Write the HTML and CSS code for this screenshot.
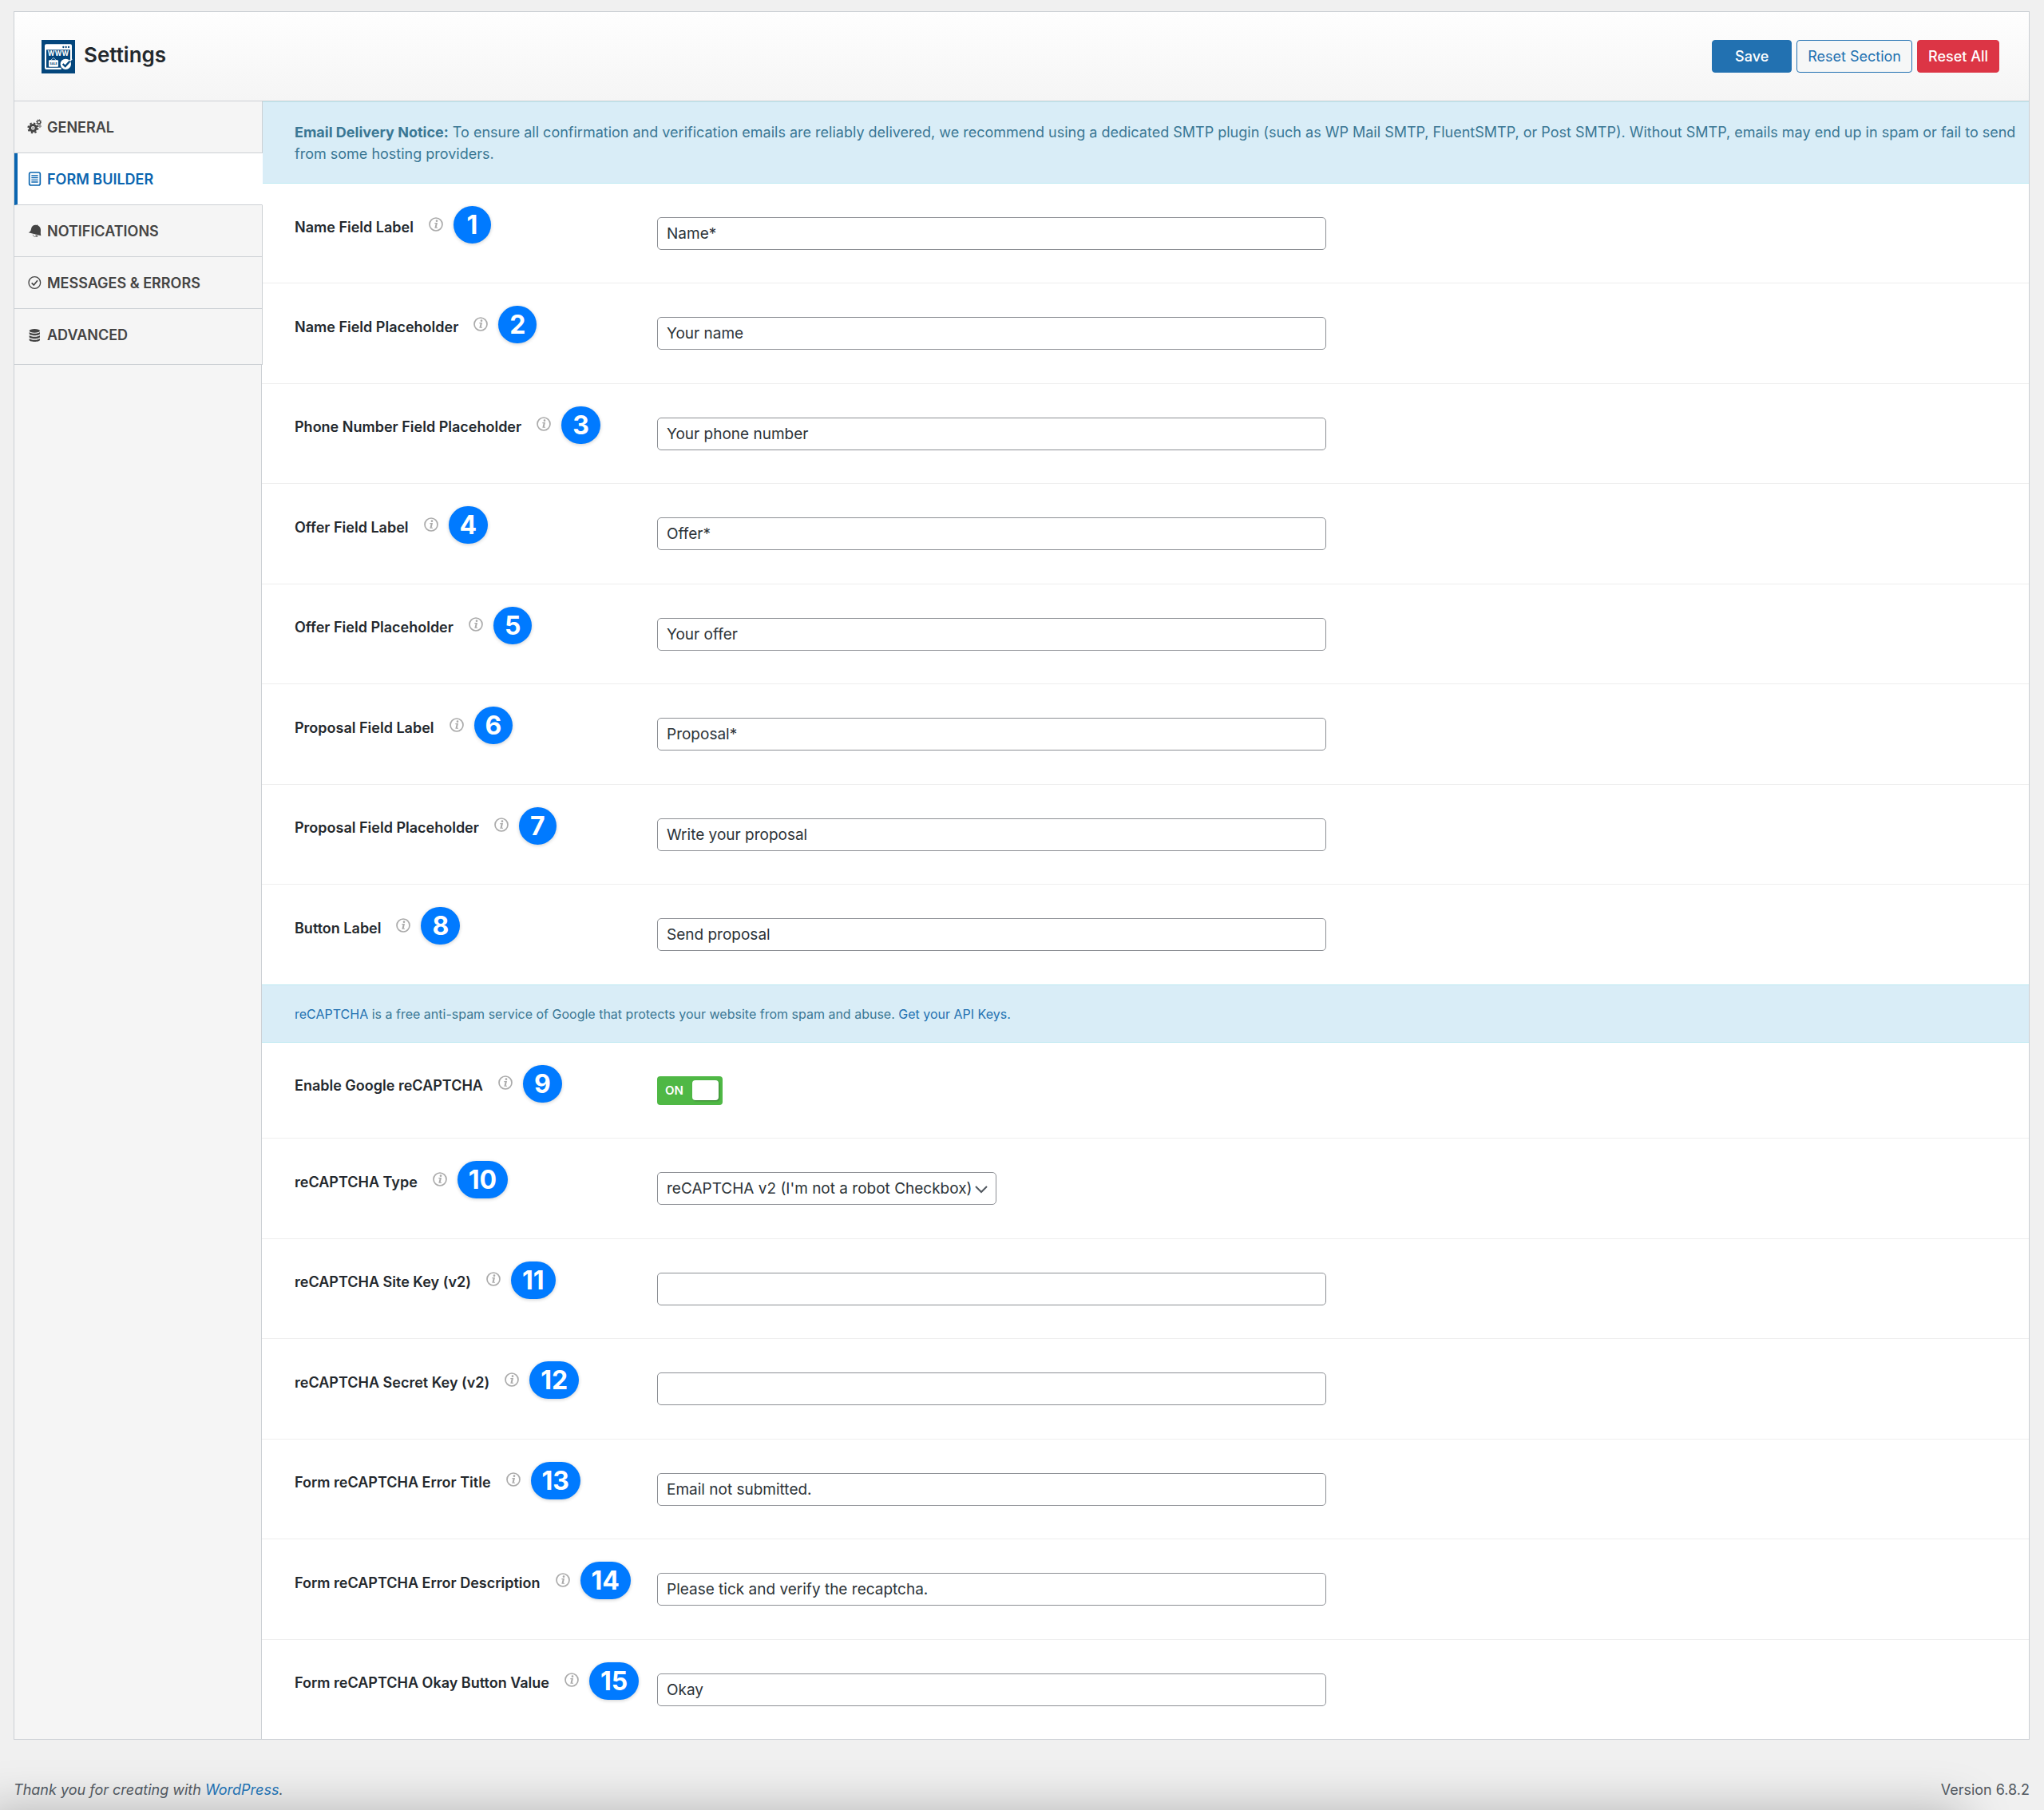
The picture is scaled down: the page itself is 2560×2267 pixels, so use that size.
FILE: index.html
```html
<!DOCTYPE html>
<html lang="en">
<head>
    <meta charset="UTF-8">
    <meta name="viewport" content="width=device-width, initial-scale=1.0">
    <title>Settings</title>
    <link rel="stylesheet" href="styles.css">
</head>
<body>

<!-- shared info icon -->
<svg class="sprite" aria-hidden="true">
    <symbol id="info" viewBox="0 0 54 54">
        <circle cx="27" cy="27" r="24" fill="none" stroke="#aaa" stroke-width="5"/>
        <circle cx="30" cy="14" r="4" fill="#aaa"/>
        <path d="M22 21h11l-4 17h4v3H22l4-16h-4z" fill="#aaa"/>
    </symbol>
</svg>

<form class="panel">
    <header class="panel-header">
        <svg class="logo" viewBox="0 0 126 126" aria-hidden="true">
            <rect width="126" height="126" fill="#04467c"/>
            <path d="M18 16h90a6 6 0 0 1 6 6v50h-6V37H18v67h56v7H18a6 6 0 0 1-6-6V22a6 6 0 0 1 6-6z" fill="#fff"/>
            <circle cx="82" cy="27" r="3.4" fill="#04467c"/>
            <circle cx="92" cy="27" r="3.4" fill="#04467c"/>
            <circle cx="102" cy="27" r="3.4" fill="#04467c"/>
            <text x="63" y="61" text-anchor="middle" class="logo-www">WWW</text>
            <path d="M33 78l12-11 12 11" fill="none" stroke="#fff" stroke-width="2"/>
            <rect x="27" y="76" width="36" height="25" rx="3" fill="#fff"/>
            <text x="45" y="93" text-anchor="middle" class="logo-sale">SALE</text>
            <circle cx="91" cy="91" r="20" fill="#fff"/>
            <path d="M80 90l9 9 20-22" fill="none" stroke="#04467c" stroke-width="7"/>
            <path d="M106 79l8-8" stroke="#fff" stroke-width="6"/>
        </svg>
        <h1>Settings</h1>
        <div class="actions">
            <button type="submit" class="btn btn-save">Save</button>
            <button type="button" class="btn btn-outline">Reset Section</button>
            <button type="button" class="btn btn-danger">Reset All</button>
        </div>
    </header>

    <div class="panel-body">
        <aside class="sidebar">
            <nav>
                <a href="#general">
                    <svg class="nav-icon" viewBox="0 0 54 60" aria-hidden="true">
                        <g fill="none" stroke="currentColor">
                            <circle cx="22" cy="34" r="11.5" stroke-width="9"/>
                            <circle cx="22" cy="34" r="18" stroke-width="6" stroke-dasharray="7 7.13"/>
                            <circle cx="22" cy="34" r="2.5" stroke-width="2"/>
                            <circle cx="44" cy="12" r="6" stroke-width="4"/>
                            <circle cx="44" cy="12" r="9.5" stroke-width="3" stroke-dasharray="3.7 3.76"/>
                            <circle cx="48" cy="27" r="3" stroke-width="2"/>
                            <circle cx="48" cy="27" r="5" stroke-width="2" stroke-dasharray="2 1.92"/>
                        </g>
                    </svg>
                    GENERAL
                </a>
                <a href="#form-builder" class="active">
                    <svg class="nav-icon" viewBox="0 0 54 60" aria-hidden="true">
                        <rect x="8" y="6" width="41" height="48" rx="6" fill="none" stroke="currentColor" stroke-width="5"/>
                        <path d="M16 18h25M16 26h25M16 34h25M16 42h25" stroke="currentColor" stroke-width="4"/>
                    </svg>
                    FORM BUILDER
                </a>
                <a href="#notifications">
                    <svg class="nav-icon" viewBox="0 0 54 60" aria-hidden="true">
                        <path d="M5 37c7-3 9-7 10-14C17 12 26 7 35 9c1-3 5-2 5 1 8 4 12 12 11 21-1 7 0 11 1 18z" fill="currentColor"/>
                        <path d="M22 44c0 8 9 12 14 5" fill="none" stroke="currentColor" stroke-width="2"/>
                        <path d="M30 46l6 8 5-5z" fill="currentColor"/>
                    </svg>
                    NOTIFICATIONS
                </a>
                <a href="#messages">
                    <svg class="nav-icon" viewBox="0 0 54 60" aria-hidden="true">
                        <circle cx="28" cy="30" r="22" fill="none" stroke="currentColor" stroke-width="4"/>
                        <path d="M17 31l8 8 14-17" fill="none" stroke="currentColor" stroke-width="5"/>
                    </svg>
                    MESSAGES &amp; ERRORS
                </a>
                <a href="#advanced">
                    <svg class="nav-icon" viewBox="0 0 54 60" aria-hidden="true">
                        <g fill="currentColor">
                            <ellipse cx="28" cy="13" rx="20" ry="7"/>
                            <path d="M8 18c6 7 34 7 40 0v6c0 9-40 9-40 0z"/>
                            <path d="M8 30c6 7 34 7 40 0v6c0 9-40 9-40 0z"/>
                            <path d="M8 42c6 7 34 7 40 0v5c0 9-40 9-40 0z"/>
                        </g>
                    </svg>
                    ADVANCED
                </a>
            </nav>
        </aside>

        <main class="content">
            <div class="notice">
                <strong>Email Delivery Notice:</strong> To ensure all confirmation and verification emails are reliably delivered, we recommend using a dedicated SMTP plugin (such as WP Mail SMTP, FluentSMTP, or Post SMTP). Without SMTP, emails may end up in spam or fail to send from some hosting providers.
            </div>

            <div class="field">
                <div class="field-title">
                    <label for="name_label">Name Field Label</label>
                    <svg class="info"><use href="#info"/></svg>
                    <span class="step">1</span>
                </div>
                <input type="text" id="name_label" value="Name*">
            </div>
            <div class="field">
                <div class="field-title">
                    <label for="name_placeholder">Name Field Placeholder</label>
                    <svg class="info"><use href="#info"/></svg>
                    <span class="step">2</span>
                </div>
                <input type="text" id="name_placeholder" value="Your name">
            </div>
            <div class="field">
                <div class="field-title">
                    <label for="phone_placeholder">Phone Number Field Placeholder</label>
                    <svg class="info"><use href="#info"/></svg>
                    <span class="step">3</span>
                </div>
                <input type="text" id="phone_placeholder" value="Your phone number">
            </div>
            <div class="field">
                <div class="field-title">
                    <label for="offer_label">Offer Field Label</label>
                    <svg class="info"><use href="#info"/></svg>
                    <span class="step">4</span>
                </div>
                <input type="text" id="offer_label" value="Offer*">
            </div>
            <div class="field">
                <div class="field-title">
                    <label for="offer_placeholder">Offer Field Placeholder</label>
                    <svg class="info"><use href="#info"/></svg>
                    <span class="step">5</span>
                </div>
                <input type="text" id="offer_placeholder" value="Your offer">
            </div>
            <div class="field">
                <div class="field-title">
                    <label for="proposal_label">Proposal Field Label</label>
                    <svg class="info"><use href="#info"/></svg>
                    <span class="step">6</span>
                </div>
                <input type="text" id="proposal_label" value="Proposal*">
            </div>
            <div class="field">
                <div class="field-title">
                    <label for="proposal_placeholder">Proposal Field Placeholder</label>
                    <svg class="info"><use href="#info"/></svg>
                    <span class="step">7</span>
                </div>
                <input type="text" id="proposal_placeholder" value="Write your proposal">
            </div>
            <div class="field">
                <div class="field-title">
                    <label for="button_label">Button Label</label>
                    <svg class="info"><use href="#info"/></svg>
                    <span class="step">8</span>
                </div>
                <input type="text" id="button_label" value="Send proposal">
            </div>

            <div class="notice notice-small">
                <a href="#recaptcha">reCAPTCHA</a> is a free anti-spam service of Google that protects your website from spam and abuse. <a href="#keys">Get your API Keys.</a>
            </div>

            <div class="field">
                <div class="field-title">
                    <label for="enable_recaptcha">Enable Google reCAPTCHA</label>
                    <svg class="info"><use href="#info"/></svg>
                    <span class="step">9</span>
                </div>
                <label class="switch">
                    <span>ON</span>
                    <input type="checkbox" id="enable_recaptcha" checked>
                </label>
            </div>
            <div class="field">
                <div class="field-title">
                    <label for="recaptcha_type">reCAPTCHA Type</label>
                    <svg class="info"><use href="#info"/></svg>
                    <span class="step">10</span>
                </div>
                <div class="select-wrap">
                    <select id="recaptcha_type">
                        <option>reCAPTCHA v2 (I'm not a robot Checkbox)</option>
                    </select>
                    <svg class="chevron" viewBox="0 0 16 16" aria-hidden="true">
                        <path d="M1 5l7 7 7-7" fill="none" stroke="#50575e" stroke-width="2"/>
                    </svg>
                </div>
            </div>
            <div class="field">
                <div class="field-title">
                    <label for="site_key">reCAPTCHA Site Key (v2)</label>
                    <svg class="info"><use href="#info"/></svg>
                    <span class="step">11</span>
                </div>
                <input type="text" id="site_key">
            </div>
            <div class="field">
                <div class="field-title">
                    <label for="secret_key">reCAPTCHA Secret Key (v2)</label>
                    <svg class="info"><use href="#info"/></svg>
                    <span class="step">12</span>
                </div>
                <input type="text" id="secret_key">
            </div>
            <div class="field">
                <div class="field-title">
                    <label for="error_title">Form reCAPTCHA Error Title</label>
                    <svg class="info"><use href="#info"/></svg>
                    <span class="step">13</span>
                </div>
                <input type="text" id="error_title" value="Email not submitted.">
            </div>
            <div class="field">
                <div class="field-title">
                    <label for="error_description">Form reCAPTCHA Error Description</label>
                    <svg class="info"><use href="#info"/></svg>
                    <span class="step">14</span>
                </div>
                <input type="text" id="error_description" value="Please tick and verify the recaptcha.">
            </div>
            <div class="field">
                <div class="field-title">
                    <label for="okay_value">Form reCAPTCHA Okay Button Value</label>
                    <svg class="info"><use href="#info"/></svg>
                    <span class="step">15</span>
                </div>
                <input type="text" id="okay_value" value="Okay">
            </div>
        </main>
    </div>
</form>

<footer class="page-footer">
    <em>Thank you for creating with <a href="#wordpress">WordPress</a>.</em>
    <span>Version 6.8.2</span>
</footer>

</body>
</html>
```
FILE: styles.css
```css
* {
    box-sizing: border-box;
}

body {
    display: flex;
    flex-direction: column;
    min-height: 100vh;
    margin: 0;
    background: #f0f0f0;
    color: #23282d;
    font-family: Inter, "Liberation Sans", sans-serif;
    font-size: 18px;
}

a {
    color: #2271b1;
    text-decoration: none;
}

.sprite {
    display: none;
}

.panel {
    display: flex;
    flex-direction: column;
    flex: 1;
    margin: 14px 18px 0 17px;
    background: #fff;
    border: 1px solid #ccd0d4;
}

/* header */
.panel-header {
    display: flex;
    align-items: center;
    height: 112px;
    padding: 0 37px 0 34px;
    background: linear-gradient(#fefefe, #f5f5f5);
    border-bottom: 1px solid #ccd0d4;
}

.logo {
    width: 42px;
    height: 42px;
}

.logo-www {
    font: bold 25px Inter, sans-serif;
    fill: #fff;
}

.logo-sale {
    font: bold 11px Inter, sans-serif;
    fill: #04467c;
}

h1 {
    margin: 0 0 4px 11px;
    font-size: 26px;
    font-weight: 600;
}

.actions {
    display: flex;
    gap: 6px;
    margin-left: auto;
}

.btn {
    height: 41px;
    padding: 0 13px;
    border: 1px solid;
    border-radius: 4px;
    font: 18px Inter, "Liberation Sans", sans-serif;
    cursor: pointer;
}

.btn-save {
    padding: 0 28px;
    background: #2271b1;
    border-color: #2271b1;
    color: #fff;
    font-weight: 500;
}

.btn-outline {
    background: #f6f7f7;
    border-color: #2271b1;
    color: #2271b1;
}

.btn-danger {
    background: #dc3545;
    border-color: #dc3545;
    color: #fff;
    font-weight: 500;
}

/* sidebar */
.panel-body {
    display: flex;
    flex: 1;
}

.sidebar {
    flex: 0 0 310px;
    background: #f5f5f5;
    border-right: 1px solid #ccd0d4;
}

.sidebar nav {
    position: relative;
    margin-right: -2px;
}

.sidebar a {
    display: flex;
    align-items: center;
    gap: 7px;
    height: 65px;
    padding-left: 16px;
    background: #f5f5f5;
    border: solid #ccd0d4;
    border-width: 0 1px 1px 0;
    color: #444;
    font-weight: 600;
}

.sidebar a:last-child {
    height: 70px;
    padding-bottom: 4px;
}

.sidebar a.active {
    padding-left: 12px;
    background: #fff;
    border-left: 4px solid #0a65b0;
    border-right-color: #fff;
    color: #0a65b0;
}

.nav-icon {
    width: 18px;
    height: 20px;
}

/* fields */
.content {
    display: flex;
    flex-direction: column;
    flex: 1;
}

.notice {
    padding: 24px 12px 23px 41px;
    background: #d9edf7;
    border: solid #bce8f1;
    border-width: 1px 0;
    color: #3a7794;
    line-height: 27px;
}

.notice-small {
    font-size: 16px;
    line-height: 24px;
}

.field {
    display: flex;
    align-items: flex-start;
    flex: 1 0 auto;
    padding: 42px 41px 40px;
    border-bottom: 1px solid #eee;
}

.field:last-child,
.field:has(+ .notice) {
    border-bottom: 0;
}

.field-title {
    display: flex;
    align-items: center;
    flex: 0 0 454px;
    height: 47px;
    margin: -14px 0 -8px;
}

.field-title label {
    padding-top: 5px;
    font-weight: 600;
}

.info {
    width: 18px;
    height: 18px;
    margin: 0 13px 2px 19px;
}

.step {
    min-width: 47px;
    padding: 0 14px;
    background: #007aff;
    border-radius: 24px;
    box-shadow: 0 1px 4px rgba(0, 0, 0, 0.2);
    color: #fff;
    font-size: 32px;
    font-weight: 700;
    line-height: 47px;
    text-align: center;
}

input[type="text"],
select {
    height: 41px;
    padding: 0 11px;
    background: #fff;
    border: 1px solid #8c8f94;
    border-radius: 5px;
    color: #2c3338;
    font: 19px Inter, "Liberation Sans", sans-serif;
}

input[type="text"] {
    flex: 0 1 838px;
}

.select-wrap {
    position: relative;
}

select {
    width: 425px;
    appearance: none;
}

.chevron {
    position: absolute;
    top: 13px;
    right: 11px;
    width: 16px;
    height: 16px;
    pointer-events: none;
}

.switch {
    display: flex;
    align-items: center;
    justify-content: space-between;
    width: 82px;
    height: 36px;
    padding: 0 5px 0 10px;
    background: #4fb845;
    border-radius: 4px;
    color: #fff;
    font-size: 15px;
    font-weight: 600;
}

.switch input {
    width: 33px;
    height: 25px;
    margin: 0;
    appearance: none;
    background: #fff;
    border-radius: 4px;
    box-shadow: 1px 1px 2px rgba(0, 0, 0, 0.3);
}

/* footer */
.page-footer {
    position: relative;
    display: flex;
    align-items: center;
    justify-content: space-between;
    height: 88px;
    padding: 37px 18px 0 17px;
    overflow: hidden;
    color: #50575e;
}

.page-footer::before {
    content: "";
    position: absolute;
    top: 100%;
    left: -20px;
    right: 100px;
    height: 100px;
    box-shadow: 0 0 60px rgba(0, 0, 0, 0.25);
}

.page-footer em,
.page-footer span {
    position: relative;
}
```
